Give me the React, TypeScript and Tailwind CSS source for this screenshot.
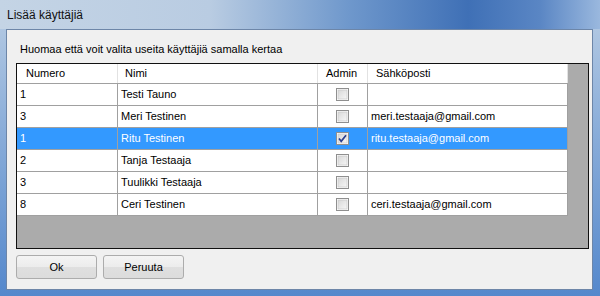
import * as React from "react";

type Row = { num: string; name: string; admin: boolean; email: string };

const rows: Row[] = [
	{ num: "1", name: "Testi Tauno", admin: false, email: "" },
	{ num: "3", name: "Meri Testinen", admin: false, email: "meri.testaaja@gmail.com" },
	{ num: "1", name: "Ritu Testinen", admin: true, email: "ritu.testaaja@gmail.com" },
	{ num: "2", name: "Tanja Testaaja", admin: false, email: "" },
	{ num: "3", name: "Tuulikki Testaaja", admin: false, email: "" },
	{ num: "8", name: "Ceri Testinen", admin: false, email: "ceri.testaaja@gmail.com" },
];

const selectedIndex = 2;

const CheckBox = ({ checked }: { checked: boolean }) => (
	<svg width="13" height="13" viewBox="0 0 13 13">
		<defs>
			<linearGradient id="cbg" x1="0" y1="0" x2="1" y2="1">
				<stop offset="0" stopColor="#d8d8d8" />
				<stop offset="1" stopColor="#f7f7f7" />
			</linearGradient>
		</defs>
		<rect x="0.5" y="0.5" width="12" height="12" fill="#fdfdfd" stroke="#8f8f8f" />
		<rect x="2" y="2" width="9" height="9" fill="url(#cbg)" stroke="#c4c4c4" strokeWidth="0.6" />
		{checked && (
			<path d="M3 6.5 L5.2 9.3 L10 3.2" fill="none" stroke="#2a3f8f" strokeWidth="1.7" />
		)}
	</svg>
);

const Cell = ({ w, children, center }: { w: string; children?: React.ReactNode; center?: boolean }) => (
	<div
		className={`${w} h-full border-r border-[#a0a0a0] flex items-center ${center ? "justify-center" : "pl-[3px]"} whitespace-nowrap overflow-hidden`}
	>
		{children}
	</div>
);

const App = () => {
	return (
		<div
			className="w-[600px] h-[296px] flex flex-col bg-[linear-gradient(180deg,#b9cde4_0%,#8eb0da_40%,#5588cc_100%)] text-[11px] text-black"
			style={{ fontFamily: '"Liberation Sans", Arial, sans-serif' }}
		>
			{/* title bar */}
			<div className="h-[29px] shrink-0 flex items-center pl-[7px] bg-[linear-gradient(90deg,#c4d4e5_0%,#b9cce2_35%,#6f98cc_58%,#3f70b6_78%,#5a86c4_90%,#9ab8de_100%)]">
				<span className="text-[12px] text-[#111]">Lisää käyttäjiä</span>
			</div>

			{/* client area */}
			<div className="flex-1 ml-[6px] mr-[7px] mb-[6px] border border-[#6d86a8] bg-[#f0f0f0] flex flex-col">
				<div className="mt-[13px] ml-[13px] h-[13px] leading-[13px]">
					Huomaa että voit valita useita käyttäjiä samalla kertaa
				</div>

				<div className="mt-[7px] ml-[9px] w-[573px] h-[186px] shrink-0 border border-[#101010] bg-[#ababab]">
					<div className="flex w-[551px] h-[20px] bg-white border-b border-[#a0a0a0]">
						<div className="w-[101px] h-full border-r border-[#e2e2e2] flex items-center pl-[9px]">Numero</div>
						<div className="w-[200px] h-full border-r border-[#e2e2e2] flex items-center pl-[7px]">Nimi</div>
						<div className="w-[50px] h-full border-r border-[#e2e2e2] flex items-center pl-[8px]">Admin</div>
						<div className="w-[200px] h-full border-r border-[#e2e2e2] flex items-center pl-[8px]">Sähköposti</div>
					</div>
					{rows.map((r, i) => {
						const sel = i === selectedIndex;
						return (
							<div
								key={i}
								className={`flex w-[551px] h-[22px] border-b border-[#a0a0a0] ${sel ? "bg-[#3399ff] text-white" : "bg-white"}`}
							>
								<Cell w="w-[101px]">{r.num}</Cell>
								<Cell w="w-[200px]">{r.name}</Cell>
								<Cell w="w-[50px]" center>
									<CheckBox checked={r.admin} />
								</Cell>
								<Cell w="w-[200px]">{r.email}</Cell>
							</div>
						);
					})}
				</div>

				<div className="mt-[6px] ml-[9px] flex gap-[6px]">
					<button className="w-[81px] h-[24px] rounded-[3px] border border-[#acacac] bg-[linear-gradient(180deg,#f4f4f4_0%,#ececec_50%,#dfdfdf_51%,#dcdcdc_100%)] text-[11px]">
						Ok
					</button>
					<button className="w-[81px] h-[24px] rounded-[3px] border border-[#acacac] bg-[linear-gradient(180deg,#f4f4f4_0%,#ececec_50%,#dfdfdf_51%,#dcdcdc_100%)] text-[11px]">
						Peruuta
					</button>
				</div>
			</div>
		</div>
	);
};

export default App;
